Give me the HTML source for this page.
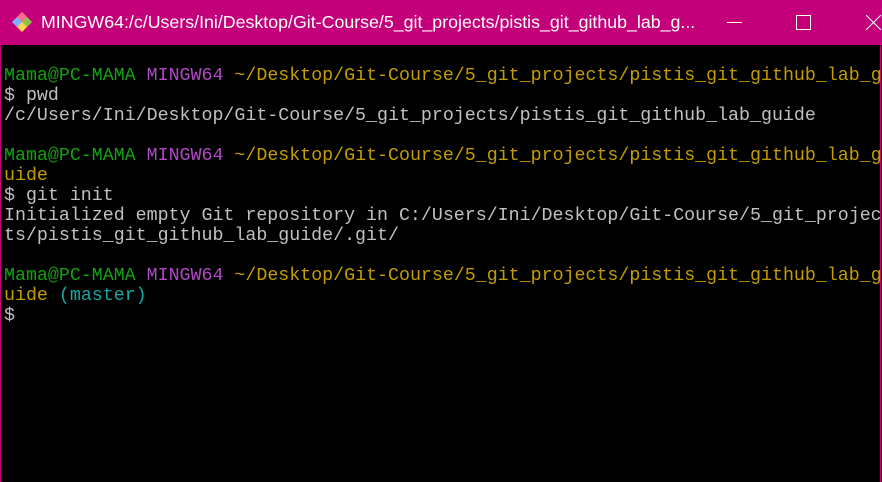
<!DOCTYPE html>
<html><head><meta charset="utf-8"><style>
html,body{margin:0;padding:0;width:882px;height:482px;overflow:hidden;background:#000}
.tb{position:absolute;left:0;top:0;width:882px;height:45px;background:#c3007a;color:#fff;font-family:"Liberation Sans",sans-serif;font-size:17.8px}
.tt{position:absolute;left:41px;top:12px;white-space:nowrap}
.term{position:absolute;left:0;top:45px;width:881px;height:437px;border-left:1px solid #c3007a;border-right:1px solid #c3007a;box-sizing:border-box}
pre{margin:0;position:absolute;left:3px;top:21px;font-family:"Liberation Mono",monospace;font-size:18.3px;line-height:20px;color:#c0c0c0;white-space:pre}
.g{color:#13a10e}.p{color:#b148c6}.y{color:#c19c00}.c{color:#1aa5a0}
</style></head><body>
<div class="tb">
<svg style="position:absolute;left:12px;top:12px" width="20" height="20" viewBox="0 0 20 20">
<polygon points="10,0 20,10 10,20 0,10" fill="#f05033"/>
<polygon points="10,0 15,5 10,10 5,5" fill="#ff6f8f"/>
<polygon points="15,5 20,10 15,15 10,10" fill="#8bc34a"/>
<polygon points="5,5 10,10 5,15 0,10" fill="#7fb3ff"/>
<polygon points="10,10 15,15 10,20 5,15" fill="#ffd54f"/>
</svg>
<div class="tt">MINGW64:/c/Users/Ini/Desktop/Git-Course/5_git_projects/pistis_git_github_lab_g...</div>
<div style="position:absolute;left:727px;top:22px;width:15px;height:1px;background:#fff"></div>
<div style="position:absolute;left:796px;top:15px;width:13px;height:13px;border:1px solid #fff"></div>
<svg style="position:absolute;left:866px;top:15px" width="16" height="15"><path d="M0 0L15 15M15 0L0 15" stroke="#fff" stroke-width="1"/></svg>
</div>
<div class="term"><pre><span class="g">Mama@PC-MAMA</span> <span class="p">MINGW64</span> <span class="y">~/Desktop/Git-Course/5_git_projects/pistis_git_github_lab_g</span>
$ pwd
/c/Users/Ini/Desktop/Git-Course/5_git_projects/pistis_git_github_lab_guide

<span class="g">Mama@PC-MAMA</span> <span class="p">MINGW64</span> <span class="y">~/Desktop/Git-Course/5_git_projects/pistis_git_github_lab_g
uide</span>
$ git init
Initialized empty Git repository in C:/Users/Ini/Desktop/Git-Course/5_git_projec
ts/pistis_git_github_lab_guide/.git/

<span class="g">Mama@PC-MAMA</span> <span class="p">MINGW64</span> <span class="y">~/Desktop/Git-Course/5_git_projects/pistis_git_github_lab_g
uide</span> <span class="c">(master)</span>
$</pre></div>
</body></html>
